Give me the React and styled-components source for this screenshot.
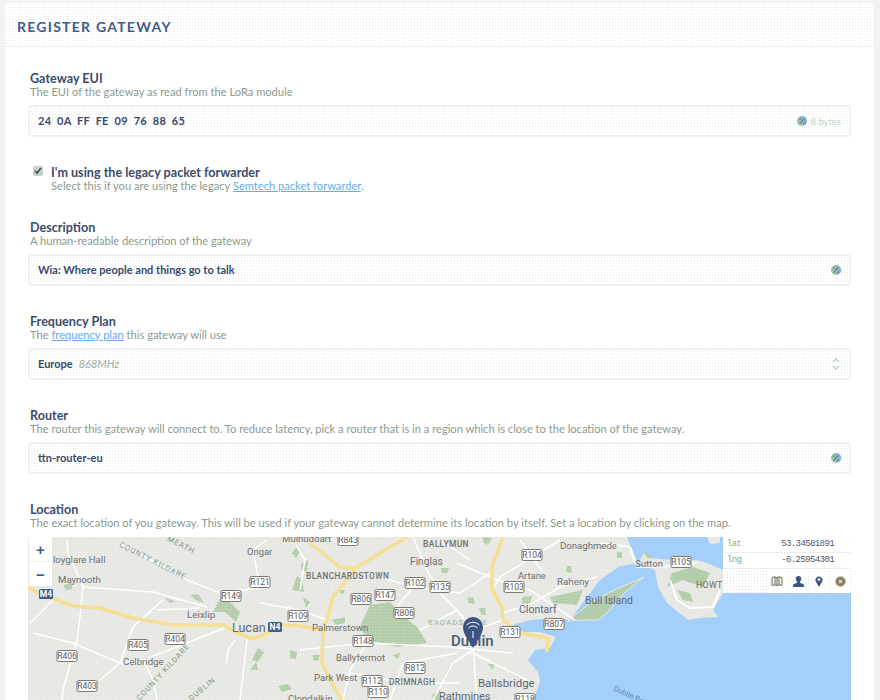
import React from "react";
import styled, { createGlobalStyle } from "styled-components";

const Global = createGlobalStyle`
  html, body { margin: 0; height: 700px; overflow: hidden; background: #f1f3f3; }
  body { font-family: Lato, "Open Sans", sans-serif; }
`;

const dither = (c) => `radial-gradient(${c} 0.75px, transparent 0.9px)`;

const Page = styled.div`
  padding: 3px 6px 0 5px;
`;
const Card = styled.main`
  background: #fff;
`;
const Header = styled.header`
  height: 44px;
  display: flex;
  align-items: center;
  padding: 3px 0 0 12px;
  background-color: #fff;
  background-image: ${dither("#e9ebeb")};
  background-size: 3px 3px;
  border-bottom: 1px solid #e9ebeb;
  box-sizing: border-box;
`;
const Title = styled.h1`
  margin: 0;
  font-size: 14px;
  font-weight: 700;
  letter-spacing: 1.25px;
  color: #3f5b8c;
  text-transform: uppercase;
`;
const Form = styled.form`
  padding: 24px 23px 0;
  display: flex;
  flex-direction: column;
  gap: 28px;
`;
const Field = styled.section`
  display: flex;
  flex-direction: column;
`;
const Label = styled.div`
  font-size: 12.6px;
  line-height: 14px;
  font-weight: 700;
  color: #3c4b6b;
  padding: 1px 0 0 ${(p) => p.$inset ?? 2}px;
  margin-bottom: -1px;
`;
const Help = styled.div`
  font-size: 11.13px;
  line-height: 14px;
  color: #8c9a8e;
  padding-left: ${(p) => p.$inset ?? 2}px;
  margin-bottom: ${(p) => p.$gap ?? 6}px;
`;
const Link = styled.a`
  color: #6aa9e8;
  text-decoration: underline;
`;
const Input = styled.div`
  height: 32px;
  box-sizing: border-box;
  display: flex;
  align-items: center;
  justify-content: space-between;
  padding: 0 8px 2px;
  border: 2px solid #eff0f0;
  border-radius: 4px;
  background-color: #fff;
  background-image: ${dither("#e9ebe9")};
  background-size: 3px 3px;
`;
const Value = styled.span`
  font-size: 11px;
  font-weight: 700;
  color: #3a496c;
  white-space: pre;
  letter-spacing: ${(p) => p.$spacing || "0"};
`;
const Muted = styled.span`
  font-size: 11px;
  font-style: italic;
  font-weight: 400;
  color: #9aa99a;
  margin-left: 6px;
`;
const Addon = styled.span`
  display: flex;
  align-items: center;
  gap: 3px;
  font-size: 9.5px;
  color: #c3d4c3;
  padding-top: 2px;
`;
const CheckRow = styled.section`
  display: flex;
  gap: 8px;
  padding-left: 5px;
  margin-bottom: -1px;
`;
const CheckBox = styled.span`
  width: 10px;
  height: 10px;
  margin-top: 1px;
  background: #c6d2c8;
  border-radius: 2px;
  display: flex;
  align-items: center;
  justify-content: center;
  flex: none;
`;
const CheckText = styled.div`
  display: flex;
  flex-direction: column;
`;
const MapBox = styled.div`
  position: relative;
  height: 180px;
  overflow: hidden;
  border-radius: 4px 4px 0 0;
  background: #e7e7e4;
`;
const MapSvg = styled.svg`
  display: block;
`;
const Zoom = styled.div`
  position: absolute;
  left: 1px;
  top: 0;
  width: 23px;
  background: #fff;
  display: flex;
  flex-direction: column;
`;
const ZoomBtn = styled.button`
  all: unset;
  height: 24px;
  display: flex;
  align-items: center;
  justify-content: center;
  font: 700 15px/1 "Liberation Sans", sans-serif;
  color: #3f5b8c;
  & + & { border-top: 1px solid #eef0f0; }
`;
const Panel = styled.aside`
  position: absolute;
  right: 0;
  top: 0;
  width: 128px;
  background-color: #fff;
  background-image: ${dither("#dfe2e2")};
  background-size: 3px 3px;
`;
const CoordRow = styled.div`
  height: 16px;
  box-sizing: border-box;
  padding: 0 17px 0 4px;
  display: flex;
  justify-content: space-between;
  align-items: center;
  background: #fff;
  border-bottom: 1px solid #eceeee;
  font: 9px/1 "Liberation Mono", monospace;
  letter-spacing: -0.6px;
  color: #4f5866;
`;
const CoordKey = styled.span`
  color: ${(p) => p.$color};
`;
const Tools = styled.div`
  height: 24px;
  display: flex;
  justify-content: flex-end;
  padding-right: 1px;
`;
const Tool = styled.span`
  width: 20px;
  margin-left: 1px;
  background: #fff;
  display: flex;
  align-items: center;
  justify-content: center;
`;

const PlaceText = styled.text`
  font-family: Roboto, sans-serif;
  font-size: ${(p) => p.$size || 9.6}px;
  font-weight: ${(p) => p.$weight || 400};
  letter-spacing: ${(p) => p.$spacing || 0}px;
  fill: ${(p) => p.$color || "#6c7070"};
  dominant-baseline: central;
`;
const SignText = styled.text`
  font-family: Roboto, sans-serif;
  font-size: 8.5px;
  fill: ${(p) => p.$color || "#5c5c5c"};
  font-weight: ${(p) => p.$weight || 400};
  text-anchor: middle;
  dominant-baseline: central;
`;

const StatusIcon = () => (
  <svg width="10" height="10" viewBox="0 0 10 10">
    <circle cx="5" cy="5" r="5" fill="#9cc0a8" />
    <path d="M5 0a5 5 0 0 1 5 5 5 5 0 0 1-3 4.500z" fill="#7fb4e4" />
    <path d="M3 7.500 7 2.500M2.500 3.500 4 2.500M6 8l1.500-1.500" stroke="#4b5c70" strokeWidth="1" fill="none" />
  </svg>
);

const Sign = ({ x, y, t }) => (
  <g>
    <rect x={x - 10} y={y - 5.5} width="20" height="11" rx="1.5" fill="#fff" stroke="#7d7870" strokeWidth="1" />
    <SignText x={x} y={y}>{t}</SignText>
  </g>
);

const Shield = ({ x, y, t }) => (
  <g>
    <rect x={x - 7} y={y - 5} width="14" height="10" rx="1.5" fill="#3f5b8c" />
    <SignText x={x} y={y} $color="#fff" $weight={700}>{t}</SignText>
  </g>
);

const whiteRoads = [
  "67,540 68,553 83,587 80,617 77,640 63,690 62,700",
  "30,623 53,600",
  "33,633 73,643 120,663 100,680",
  "83,587 153,592 207,607",
  "120,663 133,627 163,600",
  "120,543 187,580 220,593 260,588",
  "157,610 200,608",
  "143,660 227,627",
  "120,663 143,660 153,680 157,700",
  "247,640 240,700",
  "260,588 253,550 267,540",
  "260,603 300,610 327,620",
  "235,640 228,650 226,665",
  "300,590 305,560 296,545",
  "413,537 427,570 440,593 457,610 473,630 457,647",
  "367,573 413,587 460,593 490,573",
  "457,563 497,580",
  "492,590 500,577 533,557 560,540",
  "503,613 533,603 560,587 597,577",
  "473,630 503,620",
  "300,650 367,643 450,647 513,653",
  "367,643 350,670 343,700",
  "473,647 477,700",
  "473,653 527,680",
  "433,700 453,663 473,650",
  "390,700 403,663 457,653",
  "350,673 407,683 460,683",
  "413,587 397,607",
  "457,610 420,630",
  "497,580 530,590 575,620",
  "520,540 545,575",
  "440,540 470,560",
];
const yellowRoads = [
  "28,587 40,594 73,606 100,608 133,618 173,625 223,625 237,633 253,639 270,632 280,625 300,626 323,630",
  "407,537 357,567 333,597 323,633 322,663 330,680 342,700",
  "310,543 340,567 357,568",
  "503,537 492,567 492,590 502,607 503,620 520,633 548,638 547,652",
];
const parks = [
  "360,627 370,605 390,602 400,613 417,627 427,643 397,647 367,640",
  "213,612 222,595 228,600 240,612 236,622 225,612",
  "190,595 198,594 204,603 196,600",
  "165,598 175,601 170,603",
  "63,585 72,583 72,589 66,590",
  "252,660 258,648 264,652 258,662",
  "250,670 256,662 258,670",
  "290,650 297,652 296,659 290,658",
  "278,686 288,684 292,689 282,692",
  "292,553 298,545 300,552 296,558",
  "292,590 297,576 302,580 304,592",
  "441,568 449,568 447,573 442,573",
  "467,598 473,597 475,604 469,603",
  "479,608 485,608 486,615 481,614",
  "482,537 492,538 488,545 484,543",
  "550,597 583,590 577,605 553,603",
  "567,566 571,566 572,573 566,572",
  "522,597 532,596 530,604 522,603",
  "332,620 345,617 345,623 336,625",
  "303,597 310,602 306,608",
  "313,655 320,655 318,661 313,660",
  "432,695 440,690 440,700 433,700",
  "393,655 400,653 398,659",
  "488,664 494,664 493,670",
  "301,564 308,560 307,572 302,570",
  "335,590 345,590 343,594",
  "617,552 622,552 622,558 617,558",
];

const MapDrawing = () => (
  <MapSvg width="823" height="180" viewBox="28 537 823 180">
    <defs>
      <pattern id="grain" width="3" height="3" patternUnits="userSpaceOnUse">
        <rect x="0" y="0" width="1" height="1" fill="#fff" fillOpacity=".28" />
      </pattern>
    </defs>
    <rect x="28" y="537" width="823" height="180" fill="#e7e7e4" />
    {parks.map((p) => <polygon key={p} points={p} fill="#b4cdaa" />)}
    <rect x="28" y="537" width="823" height="180" fill="url(#grain)" />
    <polygon points="627,537 632,550 638,563 620,566 600,580 587,597 570,620 555,618 530,620 513,625 520,632 540,632 556,637 550,648 535,650 528,660 538,672 540,682 533,700 533,717 851,717 851,537" fill="#a5cffb" />
    <polygon points="707,537 720,537 720,543 710,544" fill="#e7e7e4" />
    <polygon points="638,563 644,553 650,558 672,560 697,560 707,563 723,570 723,593 713,610 718,617 700,618 688,620 667,603 658,587 655,570" fill="#e7e7e4" />
    <polygon points="643,550 650,556 656,558 647,558" fill="#b4cdaa" />
    <polygon points="672,573 693,567 710,573 703,587 683,580 667,587" fill="#b4cdaa" />
    <polygon points="677,590 690,593 693,602 683,600" fill="#b4cdaa" />
    <polygon points="568,621 590,603 610,592 644,577 625,592 608,612 598,620 585,620" fill="#b4cdaa" stroke="#e7e7e4" strokeWidth="1" />
    <polygon points="522,634 545,640 552,644 544,646 524,640" fill="#e7e7e4" />
    {whiteRoads.map((p) => <polyline key={p} points={p} fill="none" stroke="#fff" strokeWidth="1.5" />)}
    <polyline points="600,543 630,547 637,567 660,567 697,563" fill="none" stroke="#fff" strokeWidth="2" />
    <polyline points="670,580 677,600 690,608 713,607 720,590" fill="none" stroke="#fff" strokeWidth="2" />
    {yellowRoads.map((p) => <polyline key={p} points={p} fill="none" stroke="#f5df93" strokeWidth="3.5" />)}

    <PlaceText x="53" y="559">loyglare Hall</PlaceText>
    <PlaceText x="58" y="579">Maynooth</PlaceText>
    <PlaceText x="247" y="551" $size="9.4">Ongar</PlaceText>
    <PlaceText x="187" y="614" $size="9.9">Leixlip</PlaceText>
    <PlaceText x="232" y="627" $size="12.5" $color="#5d6876">Lucan</PlaceText>
    <PlaceText x="123" y="661">Celbridge</PlaceText>
    <PlaceText x="120" y="544" $size="7.6" $spacing=".9" $color="#7d9a7d" transform="rotate(27 120 544)">COUNTY KILDARE</PlaceText>
    <PlaceText x="168" y="538" $size="7.6" $spacing=".9" $color="#7d9a7d" transform="rotate(27 168 538)">MEATH</PlaceText>
    <PlaceText x="138" y="699" $size="7.6" $spacing=".9" $color="#7d9a7d" transform="rotate(-47 138 699)">COUNTY KILDARE</PlaceText>
    <PlaceText x="190" y="699" $size="7.6" $spacing=".9" $color="#7d9a7d" transform="rotate(-40 190 699)">DUBLIN</PlaceText>
    <PlaceText x="282" y="538">Mulhuddart</PlaceText>
    <PlaceText x="423" y="544" $size="8.4" $weight="500" $spacing=".4">BALLYMUN</PlaceText>
    <PlaceText x="410" y="561" $size="10.2">Finglas</PlaceText>
    <PlaceText x="560" y="545" $size="9.6">Donaghmede</PlaceText>
    <PlaceText x="518" y="575" $size="9.4">Artane</PlaceText>
    <PlaceText x="557" y="581" $size="9.8">Raheny</PlaceText>
    <PlaceText x="306" y="576" $size="8.3" $weight="500" $spacing=".4">BLANCHARDSTOWN</PlaceText>
    <PlaceText x="519" y="609" $size="10.5" $color="#5d6876">Clontarf</PlaceText>
    <PlaceText x="585" y="600" $size="10.4" $color="#5d6876">Bull Island</PlaceText>
    <PlaceText x="428" y="622" $size="7.6" $spacing="1.2" $color="#9db29d">BROADSTONE</PlaceText>
    <PlaceText x="312" y="627">Palmerstown</PlaceText>
    <PlaceText x="451" y="641" $size="15" $weight="500" $color="#4a5a78">Dublin</PlaceText>
    <PlaceText x="336" y="657">Ballyfermot</PlaceText>
    <PlaceText x="314" y="677">Park West</PlaceText>
    <PlaceText x="389" y="682" $size="8.3" $weight="500" $spacing=".4">DRIMNAGH</PlaceText>
    <PlaceText x="478" y="683" $size="11.4" $color="#5d6876">Ballsbridge</PlaceText>
    <PlaceText x="439" y="696" $size="10.8" $color="#5d6876">Rathmines</PlaceText>
    <PlaceText x="288" y="698">Clondalkin</PlaceText>
    <PlaceText x="635" y="563">Sutton</PlaceText>
    <PlaceText x="696" y="585" $size="8.8" $spacing=".3">HOWTH</PlaceText>
    <PlaceText x="614" y="688" $size="7.6" $color="#5a8ab8" transform="rotate(25 614 688)">Dublin Bay</PlaceText>

    <Sign x={260} y={582} t="R121" />
    <Sign x={231} y={596} t="R149" />
    <Sign x={138} y={645} t="R405" />
    <Sign x={175} y={639} t="R404" />
    <Sign x={67} y={656} t="R406" />
    <Sign x={87} y={686} t="R403" />
    <Sign x={348} y={540} t="R843" />
    <Sign x={532} y={555} t="R104" />
    <Sign x={415} y={583} t="R102" />
    <Sign x={440} y={587} t="R135" />
    <Sign x={514} y={587} t="R103" />
    <Sign x={385} y={595} t="R147" />
    <Sign x={361} y={599} t="R806" />
    <Sign x={404} y={613} t="R806" />
    <Sign x={298} y={616} t="R109" />
    <Sign x={510} y={632} t="R131" />
    <Sign x={554} y={624} t="R807" />
    <Sign x={363} y={641} t="R148" />
    <Sign x={415} y={668} t="R812" />
    <Sign x={372} y={681} t="R112" />
    <Sign x={378} y={692} t="R110" />
    <Sign x={525} y={699} t="R118" />
    <Sign x={681} y={562} t="R105" />
    <Shield x={46} y={594} t="M4" />
    <Shield x={275} y={627} t="N4" />

    <g>
      <path d="M473 648 C470 642 463 635 463 627 A10 10 0 0 1 483 627 C483 635 476 642 473 648Z" fill="#3d5482" />
      <path d="M466.500 625a9 9 0 0 1 13 0M468.500 628a6 6 0 0 1 9 0" fill="none" stroke="#fff" strokeWidth="1" />
      <path d="M473 631v7" stroke="#fff" strokeWidth="1" />
    </g>
  </MapSvg>
);

const FieldBlock = ({ label, help, children, gap }) => (
  <Field>
    <Label>{label}</Label>
    <Help $gap={gap}>{help}</Help>
    {children}
  </Field>
);

export default function App() {
  return (
    <Page>
      <Global />
      <Card>
        <Header>
          <Title>Register Gateway</Title>
        </Header>
        <Form>
          <FieldBlock label="Gateway EUI" help="The EUI of the gateway as read from the LoRa module">
            <Input>
              <Value $spacing=".25px">{"24  0A  FF  FE  09  76  88  65"}</Value>
              <Addon><StatusIcon /> 8 bytes</Addon>
            </Input>
          </FieldBlock>
          <CheckRow>
            <CheckBox>
              <svg width="8" height="8" viewBox="0 0 8 8">
                <path d="M1 4l2 2 4-5" fill="none" stroke="#3c4b5b" strokeWidth="1.6" />
              </svg>
            </CheckBox>
            <CheckText>
              <Label $inset={0}>I'm using the legacy packet forwarder</Label>
              <Help $gap={0} $inset={0}>
                Select this if you are using the legacy <Link>Semtech packet forwarder</Link>.
              </Help>
            </CheckText>
          </CheckRow>
          <FieldBlock label="Description" help="A human-readable description of the gateway">
            <Input>
              <Value>Wia: Where people and things go to talk</Value>
              <Addon><StatusIcon /></Addon>
            </Input>
          </FieldBlock>
          <FieldBlock label="Frequency Plan" help={<>The <Link>frequency plan</Link> this gateway will use</>}>
            <Input>
              <Value>Europe<Muted>868MHz</Muted></Value>
              <Addon>
                <svg width="10" height="14" viewBox="0 0 10 14">
                  <path d="M2 5l3-3 3 3M2 9l3 3 3-3" fill="none" stroke="#b4d2b6" strokeWidth="1.3" />
                </svg>
              </Addon>
            </Input>
          </FieldBlock>
          <FieldBlock label="Router" help="The router this gateway will connect to. To reduce latency, pick a router that is in a region which is close to the location of the gateway.">
            <Input>
              <Value>ttn-router-eu</Value>
              <Addon><StatusIcon /></Addon>
            </Input>
          </FieldBlock>
          <FieldBlock label="Location" gap={7} help="The exact location of you gateway. This will be used if your gateway cannot determine its location by itself. Set a location by clicking on the map.">
            <MapBox>
              <MapDrawing />
              <Zoom>
                <ZoomBtn type="button">+</ZoomBtn>
                <ZoomBtn type="button">−</ZoomBtn>
              </Zoom>
              <Panel>
                <CoordRow><CoordKey $color="#a4a878">lat</CoordKey>53.34581891</CoordRow>
                <CoordRow><CoordKey $color="#7fa9a0">lng</CoordKey>-6.25954301</CoordRow>
                <Tools>
                  <Tool>
                    <svg width="12" height="10" viewBox="0 0 12 10">
                      <path d="M1 1.500 4 .8l2 .9 2-.9 3 .7v8l-3-.7-2 .9-2-.9-3 .7zM4 1v8M6 1.700v7.600M8 1v8" fill="#f4f1df" stroke="#6a6f68" strokeWidth="1" />
                    </svg>
                  </Tool>
                  <Tool>
                    <svg width="11" height="11" viewBox="0 0 11 11">
                      <path d="M5.500 0a2.700 2.700 0 0 1 2.700 2.900c0 1.300-.7 2.200-1.300 2.800v1l4 1.700V11H.1V8.400l4-1.700v-1C3.500 5.100 2.800 4.200 2.800 2.900A2.700 2.700 0 0 1 5.500 0z" fill="#3d5482" />
                    </svg>
                  </Tool>
                  <Tool>
                    <svg width="8" height="11" viewBox="0 0 8 11">
                      <path d="M4 11 1.200 6.200A3.500 3.500 0 1 1 6.800 6.200z" fill="#3d5482" />
                      <circle cx="4" cy="3.600" r="1.500" fill="#cfe3f5" />
                    </svg>
                  </Tool>
                  <Tool>
                    <svg width="11" height="11" viewBox="0 0 11 11">
                      <circle cx="5.500" cy="5.500" r="5" fill="#7d7a76" stroke="#e3c974" strokeWidth="1" />
                      <path d="M4 4l3 3M7 4 4 7" stroke="#f2e5b0" strokeWidth="1.200" />
                    </svg>
                  </Tool>
                </Tools>
              </Panel>
            </MapBox>
          </FieldBlock>
        </Form>
      </Card>
    </Page>
  );
}
